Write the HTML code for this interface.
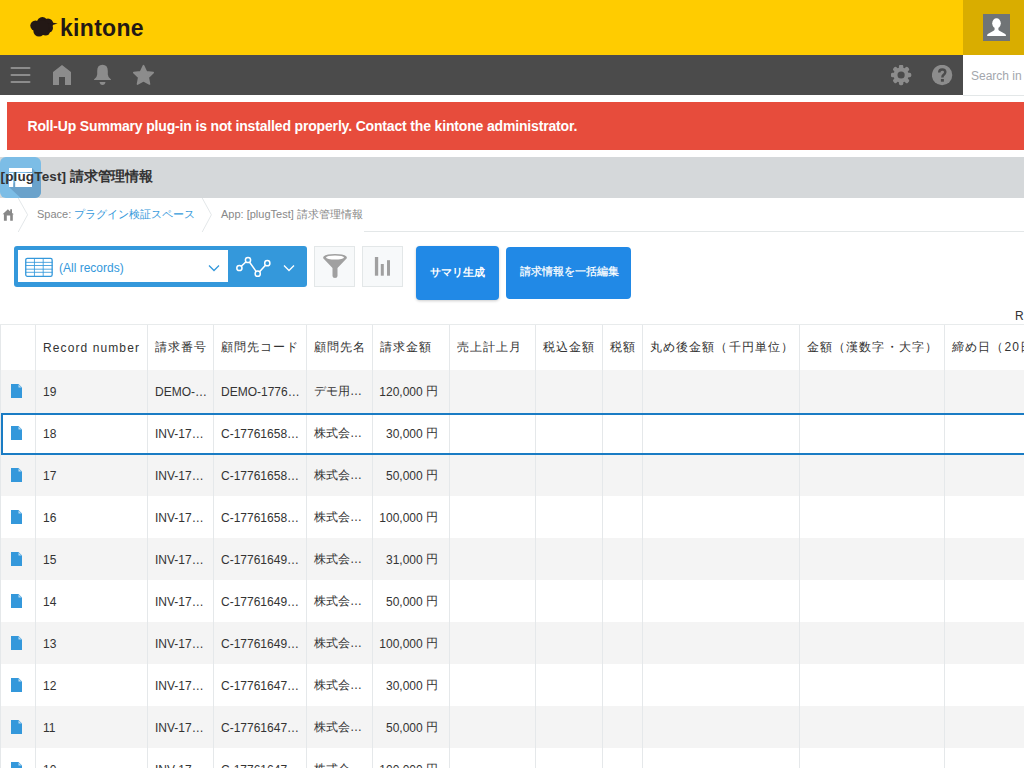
<!DOCTYPE html>
<html><head><meta charset="utf-8">
<style>
*{box-sizing:border-box}
html,body{margin:0;padding:0;width:1024px;height:768px;overflow:hidden;background:#fff;font-family:"Liberation Sans",sans-serif;color:#333}
.abs{position:absolute}
#hdr{left:0;top:0;width:1024px;height:55px;background:#ffcc00}
#hdr .usr{left:963px;top:0;width:61px;height:55px;background:#d9ad00}
#hdr .av{left:983px;top:14px;width:27px;height:27px;background:#707476}
#logo{left:60px;top:16.5px;font-size:23px;line-height:23px;font-weight:bold;color:#231815;letter-spacing:0.3px}
#nav{left:0;top:55px;width:1024px;height:40px;background:#4b4b4b}
#search{left:963px;top:55px;width:61px;height:41px;background:#fff;border-bottom:1px solid #e3e7e8}
#search span{position:absolute;left:8px;top:14px;font-size:12px;color:#a3a7ad;white-space:nowrap}
#err{left:7px;top:102px;width:1017px;height:48px;background:#e74c3c;color:#fff;font-weight:bold;font-size:14px}
#err span{position:absolute;left:20.5px;top:16px;white-space:nowrap;letter-spacing:-0.165px}
#title{left:0;top:157px;width:1024px;height:41px;background:#d5d8da}
#title .t{position:absolute;left:0.5px;top:11px;letter-spacing:0.15px;font-size:13.5px;font-weight:bold;color:#333;white-space:nowrap}
#bc{left:0;top:198px;width:1024px;height:34px}
#bc .txt{position:absolute;top:9px;font-size:11px;color:#888;white-space:nowrap}
#bc a{color:#3498db;text-decoration:none}
#tbl{left:0;top:324px;width:1024px}
.row{position:absolute;left:0;width:1024px;height:42px}
.hd{border-top:1px solid #e8ebec}
.cell{position:absolute;top:0;height:100%;border-left:1px solid #e5e8ea;font-size:12px;white-space:nowrap;overflow:hidden}
.cell span{position:absolute;left:7px;top:14.5px}
.hd .cell span{top:14px;letter-spacing:1.1px}
.cell .fi{position:absolute;left:10px;top:14px}
.cell span.r{left:auto;right:11px;top:13.5px}
.cell span.cj{top:12.5px}
.cell span i{font-style:normal;position:relative;top:-1px}
.btn{background:#2189e6;color:#fff;border-radius:4px;font-size:11.5px;display:flex;align-items:center;justify-content:center;white-space:nowrap}
.sel{position:absolute;left:1px;top:89px;width:1023px;height:42px;border:2px solid #1a7cc4;border-right:none}
</style></head><body>
<div id="hdr" class="abs">
  <div class="usr abs"></div>
  <div class="av abs">
    <svg width="27" height="27" viewBox="0 0 27 27"><ellipse cx="13.5" cy="9.3" rx="4.3" ry="5.1" fill="#fff"/><path d="M11.6 13.5 Q12 16 10.6 16.8 L4.8 20 Q4.1 20.5 4.1 21.9 H23 Q23 20.5 22.2 20 L16.4 16.8 Q15 16 15.4 13.5 Z" fill="#fff"/></svg>
  </div>
  <svg class="abs" style="left:26px;top:12px" width="36" height="30" viewBox="0 0 36 30"><g fill="#231815"><circle cx="9.5" cy="13.6" r="5.2"/><circle cx="16.4" cy="10.6" r="5.5"/><circle cx="22" cy="11.6" r="5.2"/><circle cx="22.4" cy="16" r="4.6"/><circle cx="13" cy="19" r="5.6"/><circle cx="19.6" cy="19" r="4.5"/><circle cx="16" cy="15" r="7"/><path d="M24.5 10.2 L31.7 11.4 L25 13.4Z"/></g></svg>
  <div id="logo" class="abs">kintone</div>
</div>
<div id="nav" class="abs">
  <svg class="abs" style="left:10px;top:11px" width="22" height="20"><rect x="0.5" y="1" width="20" height="2" rx="1" fill="#8c8c8c"/><rect x="0.5" y="8" width="20" height="2" rx="1" fill="#8c8c8c"/><rect x="0.5" y="15" width="20" height="2" rx="1" fill="#8c8c8c"/></svg>
  <svg class="abs" style="left:52px;top:9px" width="20" height="22" viewBox="0 0 20 22"><path d="M10 1 L19 8 V21 H13 V13 H7 V21 H1 V8 Z" fill="#8c8c8c"/></svg>
  <svg class="abs" style="left:93px;top:9px" width="19" height="22" viewBox="0 0 19 22"><path d="M9.5 0.8 Q14.8 0.8 14.8 7 V10.5 Q15 13.5 18 15.5 V16 H1 V15.5 Q4 13.5 4.2 10.5 V7 Q4.2 0.8 9.5 0.8Z" fill="#8c8c8c"/><path d="M6.5 18 H12.5 Q12 21 9.5 21 Q7 21 6.5 18Z" fill="#8c8c8c"/></svg>
  <svg class="abs" style="left:133px;top:9px" width="22" height="23" viewBox="0 0 22 23"><polygon points="10.50,1.60 13.44,7.75 20.20,8.65 15.26,13.35 16.50,20.05 10.50,16.80 4.50,20.05 5.74,13.35 0.80,8.65 7.56,7.75" fill="#8c8c8c" stroke="#8c8c8c" stroke-width="1.6" stroke-linejoin="round"/></svg>
  <svg class="abs" style="left:891px;top:10px" width="21" height="21" viewBox="0 0 21 21"><g fill="#8c8c8c"><circle cx="10.1" cy="10" r="7.6"/><rect x="7.9" y="-0.2" width="4.4" height="6" rx="1.6" transform="rotate(0 10.1 10)"/><rect x="7.9" y="-0.2" width="4.4" height="6" rx="1.6" transform="rotate(45 10.1 10)"/><rect x="7.9" y="-0.2" width="4.4" height="6" rx="1.6" transform="rotate(90 10.1 10)"/><rect x="7.9" y="-0.2" width="4.4" height="6" rx="1.6" transform="rotate(135 10.1 10)"/><rect x="7.9" y="-0.2" width="4.4" height="6" rx="1.6" transform="rotate(180 10.1 10)"/><rect x="7.9" y="-0.2" width="4.4" height="6" rx="1.6" transform="rotate(225 10.1 10)"/><rect x="7.9" y="-0.2" width="4.4" height="6" rx="1.6" transform="rotate(270 10.1 10)"/><rect x="7.9" y="-0.2" width="4.4" height="6" rx="1.6" transform="rotate(315 10.1 10)"/></g><circle cx="10.1" cy="10" r="3.6" fill="#4b4b4b"/></svg>
  <svg class="abs" style="left:932px;top:10px" width="21" height="21" viewBox="0 0 21 21"><circle cx="10.1" cy="10" r="10.2" fill="#8c8c8c"/><path d="M7.2 7.6 Q7.2 4.4 10.2 4.4 Q13.3 4.4 13.3 7.1 Q13.3 8.8 11.6 9.8 Q10.4 10.5 10.4 12.4" stroke="#4b4b4b" stroke-width="2.5" fill="none"/><rect x="8.9" y="14" width="3" height="2.7" fill="#4b4b4b"/></svg>
</div>
<div id="search" class="abs"><span>Search in</span></div>
<div id="err" class="abs"><span>Roll-Up Summary plug-in is not installed properly. Contact the kintone administrator.</span></div>
<div id="title" class="abs">
  <svg class="abs" style="left:0;top:0" width="41" height="41" viewBox="0 0 41 41"><defs><clipPath id="cp"><rect width="41" height="41" rx="6"/></clipPath></defs><g clip-path="url(#cp)"><rect width="41" height="41" fill="#7cbde6"/><path d="M9 30 L32 11 L60 39 L41 60Z" fill="#6aa2cb"/><rect x="9" y="11" width="23" height="4" fill="#fff"/><rect x="9" y="16" width="4.2" height="14" fill="#fff"/><rect x="15.2" y="16" width="16.8" height="14" fill="#fff"/></g></svg>
  <div class="t">[plugTest] <span style="letter-spacing:-0.25px">請求管理情報</span></div>
</div>
<div id="bc" class="abs">
  <svg class="abs" style="left:0;top:0" width="1024" height="34"><path d="M18.2 0 L27.6 16.8 L18.2 34" stroke="#e3e7e9" stroke-width="1" fill="none"/><path d="M202.2 0 L211.4 16.8 L202.2 34" stroke="#e3e7e9" stroke-width="1" fill="none"/><rect x="364" y="33" width="660" height="1" fill="#e3e7e8"/>
  <path d="M2.6 16.2 L7.9 11.2 L10.2 13.4 V11.2 H12 V15 L14.1 16.2 H12.8 V22.7 H10.2 V17.4 H6.8 V22.7 H3.9 V16.2Z" fill="#888"/></svg>
  <div class="txt" style="left:37px">Space: <a>プラグイン検証スペース</a></div>
  <div class="txt" style="left:221px">App: [plugTest] 請求管理情報</div>
</div>
<div id="tb" class="abs" style="left:0;top:0">
  <div class="abs" style="left:14px;top:246px;width:293px;height:41px;background:#3498db;border-radius:3px"></div>
  <div class="abs" style="left:18px;top:250px;width:210px;height:32px;background:#fff"></div>
  <svg class="abs" style="left:24px;top:257px" width="30" height="22" viewBox="0 0 30 22"><rect x="1.75" y="1.35" width="26.4" height="18" rx="1.6" fill="none" stroke="#3498db" stroke-width="1.3"/><g stroke="#3498db" stroke-width="0.85"><line x1="1.5" y1="5.35" x2="28.5" y2="5.35"/><line x1="1.5" y1="8.5" x2="28.5" y2="8.5"/><line x1="1.5" y1="12.2" x2="28.5" y2="12.2"/><line x1="1.5" y1="15.3" x2="28.5" y2="15.3"/><line x1="10.45" y1="1" x2="10.45" y2="20"/><line x1="19.2" y1="1" x2="19.2" y2="20"/></g></svg>
  <div class="abs" style="left:59px;top:261px;font-size:12px;color:#3498db;white-space:nowrap">(All records)</div>
  <svg class="abs" style="left:207px;top:263px" width="14" height="10"><path d="M2 2.5 L7 7.5 L12 2.5" stroke="#3498db" stroke-width="1.3" fill="none"/></svg>
  <svg class="abs" style="left:234px;top:255px" width="40" height="24" viewBox="0 0 40 24"><g stroke="#fff" stroke-width="1.5" fill="none"><polyline points="5.4,13 14,5 23.7,18.7 33.3,8.2"/><circle cx="5.4" cy="13" r="2.6" fill="#3498db"/><circle cx="14" cy="5" r="2.6" fill="#3498db"/><circle cx="23.7" cy="18.7" r="2.6" fill="#3498db"/><circle cx="33.3" cy="8.2" r="2.6" fill="#3498db"/></g></svg>
  <svg class="abs" style="left:282px;top:263px" width="14" height="10"><path d="M2 2.5 L7 7.5 L12 2.5" stroke="#fff" stroke-width="1.3" fill="none"/></svg>
  <div class="abs" style="left:314px;top:246px;width:41px;height:41px;background:#f7f9fa;border:1px solid #e3e7e8"></div>
  <svg class="abs" style="left:322px;top:253px" width="26" height="26" viewBox="0 0 26 26"><path d="M1 5 Q1 1 13 1 Q25 1 25 5 L15.5 15 V23 Q15.5 25 13 25 Q10.5 25 10.5 23 V15Z" fill="#a0a0a0"/><ellipse cx="13" cy="4.5" rx="9" ry="2" fill="#fff"/></svg>
  <div class="abs" style="left:362px;top:246px;width:41px;height:41px;background:#f7f9fa;border:1px solid #e3e7e8"></div>
  <svg class="abs" style="left:374px;top:256px" width="17" height="21"><rect x="0.9" y="1" width="3.3" height="18.7" fill="#a0a0a0"/><rect x="6.8" y="8" width="3" height="11.7" fill="#a0a0a0"/><rect x="13" y="4.2" width="3" height="15.5" fill="#a0a0a0"/></svg>
  <div class="abs btn" style="left:416px;top:246px;width:83px;height:54px;box-shadow:0 1px 3px rgba(0,0,0,.2)"><span style="font-weight:bold;font-size:11px;position:relative;top:-1px;left:-0.5px">サマリ生成</span></div>
  <div class="abs btn" style="left:506px;top:247px;width:125px;height:52px;font-size:11px"><span style="position:relative;top:-1.5px;left:0.5px;-webkit-text-stroke:0.25px #fff">請求情報を一括編集</span></div>
  <div class="abs" style="left:1015px;top:309px;font-size:12px;color:#333">R</div>
</div>
<div id="tbl" class="abs">
<div class="row hd" style="top:0;height:46px">
<div class="cell" style="left:0px;width:35px"></div>
<div class="cell" style="left:35px;width:112px"><span style="top:15.5px">Record number</span></div>
<div class="cell" style="left:147px;width:66px"><span>請求番号</span></div>
<div class="cell" style="left:213px;width:93px"><span>顧問先コード</span></div>
<div class="cell" style="left:306px;width:66px"><span>顧問先名</span></div>
<div class="cell" style="left:372px;width:77px"><span>請求金額</span></div>
<div class="cell" style="left:449px;width:86px"><span>売上計上月</span></div>
<div class="cell" style="left:535px;width:67px"><span>税込金額</span></div>
<div class="cell" style="left:602px;width:40px"><span>税額</span></div>
<div class="cell" style="left:642px;width:157px"><span>丸め後金額（千円単位）</span></div>
<div class="cell" style="left:799px;width:145px"><span>金額（漢数字・大字）</span></div>
<div class="cell" style="left:944px;width:80px"><span>締め日（20日</span></div>
</div>
<div class="row" style="top:46px;background:#f4f4f4">
<div class="cell" style="left:0px;width:35px"><svg class="fi" width="11" height="14" viewBox="0 0 11 14"><path d="M0 0 H7.5 L11 3.5 V14 H0Z" fill="#3498db"/><path d="M7.5 0.6 V3.5 H10.4Z" fill="#bcdcf3"/></svg></div>
<div class="cell" style="left:35px;width:112px"><span>19</span></div>
<div class="cell" style="left:147px;width:66px"><span>DEMO-…</span></div>
<div class="cell" style="left:213px;width:93px"><span>DEMO-1776…</span></div>
<div class="cell" style="left:306px;width:66px"><span class="cj">デモ用…</span></div>
<div class="cell" style="left:372px;width:77px"><span class="r">120,000 <i>円</i></span></div>
<div class="cell" style="left:449px;width:86px"></div>
<div class="cell" style="left:535px;width:67px"></div>
<div class="cell" style="left:602px;width:40px"></div>
<div class="cell" style="left:642px;width:157px"></div>
<div class="cell" style="left:799px;width:145px"></div>
<div class="cell" style="left:944px;width:80px"></div>
</div>
<div class="row" style="top:88px;background:linear-gradient(#f4f4f4 0,#f4f4f4 1px,#fff 1px)">
<div class="cell" style="left:0px;width:35px"><svg class="fi" width="11" height="14" viewBox="0 0 11 14"><path d="M0 0 H7.5 L11 3.5 V14 H0Z" fill="#3498db"/><path d="M7.5 0.6 V3.5 H10.4Z" fill="#bcdcf3"/></svg></div>
<div class="cell" style="left:35px;width:112px"><span>18</span></div>
<div class="cell" style="left:147px;width:66px"><span>INV-17…</span></div>
<div class="cell" style="left:213px;width:93px"><span>C-17761658…</span></div>
<div class="cell" style="left:306px;width:66px"><span class="cj">株式会…</span></div>
<div class="cell" style="left:372px;width:77px"><span class="r">30,000 <i>円</i></span></div>
<div class="cell" style="left:449px;width:86px"></div>
<div class="cell" style="left:535px;width:67px"></div>
<div class="cell" style="left:602px;width:40px"></div>
<div class="cell" style="left:642px;width:157px"></div>
<div class="cell" style="left:799px;width:145px"></div>
<div class="cell" style="left:944px;width:80px"></div>
</div>
<div class="row" style="top:130px;background:#f4f4f4">
<div class="cell" style="left:0px;width:35px"><svg class="fi" width="11" height="14" viewBox="0 0 11 14"><path d="M0 0 H7.5 L11 3.5 V14 H0Z" fill="#3498db"/><path d="M7.5 0.6 V3.5 H10.4Z" fill="#bcdcf3"/></svg></div>
<div class="cell" style="left:35px;width:112px"><span>17</span></div>
<div class="cell" style="left:147px;width:66px"><span>INV-17…</span></div>
<div class="cell" style="left:213px;width:93px"><span>C-17761658…</span></div>
<div class="cell" style="left:306px;width:66px"><span class="cj">株式会…</span></div>
<div class="cell" style="left:372px;width:77px"><span class="r">50,000 <i>円</i></span></div>
<div class="cell" style="left:449px;width:86px"></div>
<div class="cell" style="left:535px;width:67px"></div>
<div class="cell" style="left:602px;width:40px"></div>
<div class="cell" style="left:642px;width:157px"></div>
<div class="cell" style="left:799px;width:145px"></div>
<div class="cell" style="left:944px;width:80px"></div>
</div>
<div class="row" style="top:172px;background:#fff">
<div class="cell" style="left:0px;width:35px"><svg class="fi" width="11" height="14" viewBox="0 0 11 14"><path d="M0 0 H7.5 L11 3.5 V14 H0Z" fill="#3498db"/><path d="M7.5 0.6 V3.5 H10.4Z" fill="#bcdcf3"/></svg></div>
<div class="cell" style="left:35px;width:112px"><span>16</span></div>
<div class="cell" style="left:147px;width:66px"><span>INV-17…</span></div>
<div class="cell" style="left:213px;width:93px"><span>C-17761658…</span></div>
<div class="cell" style="left:306px;width:66px"><span class="cj">株式会…</span></div>
<div class="cell" style="left:372px;width:77px"><span class="r">100,000 <i>円</i></span></div>
<div class="cell" style="left:449px;width:86px"></div>
<div class="cell" style="left:535px;width:67px"></div>
<div class="cell" style="left:602px;width:40px"></div>
<div class="cell" style="left:642px;width:157px"></div>
<div class="cell" style="left:799px;width:145px"></div>
<div class="cell" style="left:944px;width:80px"></div>
</div>
<div class="row" style="top:214px;background:#f4f4f4">
<div class="cell" style="left:0px;width:35px"><svg class="fi" width="11" height="14" viewBox="0 0 11 14"><path d="M0 0 H7.5 L11 3.5 V14 H0Z" fill="#3498db"/><path d="M7.5 0.6 V3.5 H10.4Z" fill="#bcdcf3"/></svg></div>
<div class="cell" style="left:35px;width:112px"><span>15</span></div>
<div class="cell" style="left:147px;width:66px"><span>INV-17…</span></div>
<div class="cell" style="left:213px;width:93px"><span>C-17761649…</span></div>
<div class="cell" style="left:306px;width:66px"><span class="cj">株式会…</span></div>
<div class="cell" style="left:372px;width:77px"><span class="r">31,000 <i>円</i></span></div>
<div class="cell" style="left:449px;width:86px"></div>
<div class="cell" style="left:535px;width:67px"></div>
<div class="cell" style="left:602px;width:40px"></div>
<div class="cell" style="left:642px;width:157px"></div>
<div class="cell" style="left:799px;width:145px"></div>
<div class="cell" style="left:944px;width:80px"></div>
</div>
<div class="row" style="top:256px;background:#fff">
<div class="cell" style="left:0px;width:35px"><svg class="fi" width="11" height="14" viewBox="0 0 11 14"><path d="M0 0 H7.5 L11 3.5 V14 H0Z" fill="#3498db"/><path d="M7.5 0.6 V3.5 H10.4Z" fill="#bcdcf3"/></svg></div>
<div class="cell" style="left:35px;width:112px"><span>14</span></div>
<div class="cell" style="left:147px;width:66px"><span>INV-17…</span></div>
<div class="cell" style="left:213px;width:93px"><span>C-17761649…</span></div>
<div class="cell" style="left:306px;width:66px"><span class="cj">株式会…</span></div>
<div class="cell" style="left:372px;width:77px"><span class="r">50,000 <i>円</i></span></div>
<div class="cell" style="left:449px;width:86px"></div>
<div class="cell" style="left:535px;width:67px"></div>
<div class="cell" style="left:602px;width:40px"></div>
<div class="cell" style="left:642px;width:157px"></div>
<div class="cell" style="left:799px;width:145px"></div>
<div class="cell" style="left:944px;width:80px"></div>
</div>
<div class="row" style="top:298px;background:#f4f4f4">
<div class="cell" style="left:0px;width:35px"><svg class="fi" width="11" height="14" viewBox="0 0 11 14"><path d="M0 0 H7.5 L11 3.5 V14 H0Z" fill="#3498db"/><path d="M7.5 0.6 V3.5 H10.4Z" fill="#bcdcf3"/></svg></div>
<div class="cell" style="left:35px;width:112px"><span>13</span></div>
<div class="cell" style="left:147px;width:66px"><span>INV-17…</span></div>
<div class="cell" style="left:213px;width:93px"><span>C-17761649…</span></div>
<div class="cell" style="left:306px;width:66px"><span class="cj">株式会…</span></div>
<div class="cell" style="left:372px;width:77px"><span class="r">100,000 <i>円</i></span></div>
<div class="cell" style="left:449px;width:86px"></div>
<div class="cell" style="left:535px;width:67px"></div>
<div class="cell" style="left:602px;width:40px"></div>
<div class="cell" style="left:642px;width:157px"></div>
<div class="cell" style="left:799px;width:145px"></div>
<div class="cell" style="left:944px;width:80px"></div>
</div>
<div class="row" style="top:340px;background:#fff">
<div class="cell" style="left:0px;width:35px"><svg class="fi" width="11" height="14" viewBox="0 0 11 14"><path d="M0 0 H7.5 L11 3.5 V14 H0Z" fill="#3498db"/><path d="M7.5 0.6 V3.5 H10.4Z" fill="#bcdcf3"/></svg></div>
<div class="cell" style="left:35px;width:112px"><span>12</span></div>
<div class="cell" style="left:147px;width:66px"><span>INV-17…</span></div>
<div class="cell" style="left:213px;width:93px"><span>C-17761647…</span></div>
<div class="cell" style="left:306px;width:66px"><span class="cj">株式会…</span></div>
<div class="cell" style="left:372px;width:77px"><span class="r">30,000 <i>円</i></span></div>
<div class="cell" style="left:449px;width:86px"></div>
<div class="cell" style="left:535px;width:67px"></div>
<div class="cell" style="left:602px;width:40px"></div>
<div class="cell" style="left:642px;width:157px"></div>
<div class="cell" style="left:799px;width:145px"></div>
<div class="cell" style="left:944px;width:80px"></div>
</div>
<div class="row" style="top:382px;background:#f4f4f4">
<div class="cell" style="left:0px;width:35px"><svg class="fi" width="11" height="14" viewBox="0 0 11 14"><path d="M0 0 H7.5 L11 3.5 V14 H0Z" fill="#3498db"/><path d="M7.5 0.6 V3.5 H10.4Z" fill="#bcdcf3"/></svg></div>
<div class="cell" style="left:35px;width:112px"><span>11</span></div>
<div class="cell" style="left:147px;width:66px"><span>INV-17…</span></div>
<div class="cell" style="left:213px;width:93px"><span>C-17761647…</span></div>
<div class="cell" style="left:306px;width:66px"><span class="cj">株式会…</span></div>
<div class="cell" style="left:372px;width:77px"><span class="r">50,000 <i>円</i></span></div>
<div class="cell" style="left:449px;width:86px"></div>
<div class="cell" style="left:535px;width:67px"></div>
<div class="cell" style="left:602px;width:40px"></div>
<div class="cell" style="left:642px;width:157px"></div>
<div class="cell" style="left:799px;width:145px"></div>
<div class="cell" style="left:944px;width:80px"></div>
</div>
<div class="row" style="top:424px;background:#fff">
<div class="cell" style="left:0px;width:35px"><svg class="fi" width="11" height="14" viewBox="0 0 11 14"><path d="M0 0 H7.5 L11 3.5 V14 H0Z" fill="#3498db"/><path d="M7.5 0.6 V3.5 H10.4Z" fill="#bcdcf3"/></svg></div>
<div class="cell" style="left:35px;width:112px"><span>10</span></div>
<div class="cell" style="left:147px;width:66px"><span>INV-17…</span></div>
<div class="cell" style="left:213px;width:93px"><span>C-17761647…</span></div>
<div class="cell" style="left:306px;width:66px"><span class="cj">株式会…</span></div>
<div class="cell" style="left:372px;width:77px"><span class="r">100,000 <i>円</i></span></div>
<div class="cell" style="left:449px;width:86px"></div>
<div class="cell" style="left:535px;width:67px"></div>
<div class="cell" style="left:602px;width:40px"></div>
<div class="cell" style="left:642px;width:157px"></div>
<div class="cell" style="left:799px;width:145px"></div>
<div class="cell" style="left:944px;width:80px"></div>
</div>
<div class="sel"></div>
</div>
</body></html>
